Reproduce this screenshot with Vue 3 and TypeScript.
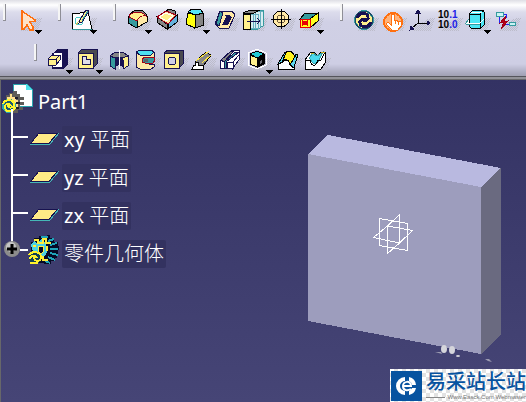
<script setup lang="ts">
import { ref } from 'vue'

// Each shape is [path data, fill, stroke?, stroke width?]
type Shape = [string, string, string?, number?]
interface Tool { name: string; menu?: boolean; measure?: boolean; shapes: Shape[] }

const N = '#171252'
const K = '#000000'
const Y = '#fff08c'
const C = '#ffe9a6'
const T = '#359a9e'
const G = '#858585'
const W = '#ffffff'
const R = '#a00018'
const circle = (x: number, y: number, r: number) =>
  `M${x - r} ${y}a${r} ${r} 0 1 0 ${2 * r} 0a${r} ${r} 0 1 0 ${-2 * r} 0Z`

const topGroups: Tool[][] = [
  [{ name: 'Select', menu: true, shapes: [
    ['M5 3V21L7 21L10 17L13 22H16V19L13 14L18 13V12Z', '#ffe3c7', '#ff7010', 1.5],
  ] }],
  [{ name: 'Sketcher', menu: true, shapes: [
    ['M0 6L16 4L20 21H0Z', W, K, 1],
    ['M0 21H20', 'none', T, 1],
    [circle(7, 13, 4), 'none', '#4bc8c8', 1],
    ['M4 17L10 9', 'none', '#c8c864', 1],
    ['M14 2L17 3L10 14L7 15L8 12Z', Y, N, 1],
    ['M16 3L10 13', 'none', T, 1],
  ] }],
  [
    { name: 'Edge Fillet', menu: true, shapes: [
      ['M3 6L8 2H15L20 7L17 8L12 5H3Z', G, K, 1],
      ['M1 8L10 13V19H8L1 15Z', T, K, 1],
      ['M10 13C11 8 15 7 20 8V14L11 19Z', C, K, 1],
      ['M2 7L8 4C14 4 17 5 19 8C14 7 12 9 10 13L2 9Z', Y, R, 1],
    ] },
    { name: 'Chamfer', shapes: [
      ['M9 3L12 1L18 3L19 7L16 8Z', G, K, 1],
      ['M0 9L10 16V21L1 15Z', G, K, 1],
      ['M11 15L20 7V14L11 21Z', '#64b1dc', K, 1],
      ['M0 9L9 3L19 7L11 16Z', C, R, 1],
      ['M2 9L9 5L16 8L10 13Z', Y, W, 1],
    ] },
    { name: 'Draft Angle', menu: true, shapes: [
      ['M3 5L11 7L10 20L1 16Z', '#ffff10', K, 1],
      ['M11 7L18 5L19 17L10 20Z', G, K, 1],
      ['M3 4L7 1L16 2L18 5L11 7Z', '#57e4f4', K, 1],
    ] },
    { name: 'Shell', shapes: [
      ['M5 3H17L20 7L14 20H4L0 16Z', C, N, 1],
      ['M5 3L8 5L4 18L1 16Z', T, N, 1],
      ['M10 7H14L17 9L13 17H7L11 9Z', N],
    ] },
    { name: 'Thickness', shapes: [
      ['M7 5L14 2H20V18L15 21H7Z', '#d9eef2', T, 1],
      ['M8 6H15V20H8M10 5V20M12 5V20M17 3V19M14 3H20', 'none', '#66afc0', 1],
      ['M0 5L7 2H17L11 5Z', G, K, 1],
      ['M0 6H7V21H0Z', Y, K, 1],
      ['M4 13H17M14 10L17 13L14 16', 'none', N, 1],
    ] },
    { name: 'Target', shapes: [
      [circle(10, 11, 8), C, K, 1], [circle(10, 11, 4), 'none', '#6f5a3d', 1],
      ['M10 1V21M0 11H20', 'none', K, 1],
    ] },
    { name: 'Remove Face', menu: true, shapes: [
      ['M1 11L6 5H19L11 11Z', T, K, 1],
      ['M11 11L19 5V13L12 19Z', '#ffff20', K, 1],
      ['M1 11H11V19H1Z', '#ffff20', '#e80000', 1],
      ['M3 13L9 17M9 13L3 17', 'none', '#e80000', 2],
    ] },
  ],
  [
    { name: 'Update All', shapes: [
      [circle(10, 12, 9), Y, T, 2],
      [circle(10, 12, 9), 'none', '#1b4a66', 1],
      ['M3 10C5 4 14 4 14 9C15 13 9 13 7 11', 'none', N, 3],
      ['M17 14C15 20 6 20 6 15C5 11 11 11 13 13', 'none', N, 3],
    ] },
    { name: 'Manual Update', shapes: [
      [circle(11, 14, 9), '#ffb37b', '#ff7010', 2],
      ['M9 6H12V12L19 14V18L16 22H10L4 16L6 14L9 17Z', W, '#ff7010', 1],
      ['M13 12V16M16 13V17', 'none', '#ff7010', 1],
    ] },
    { name: 'Axis System', shapes: [
      ['M8 15V3M8 15H20M8 15L1 21', 'none', K, 1],
      ['M8 2L6 5H10ZM20 15L17 13V17ZM0 22L1 18L4 21Z', N, N, 1],
    ] },
    { name: 'Mean Dimensions', measure: true, shapes: [] },
    { name: 'Part Body View', menu: true, shapes: [
      ['M0 15L3 11H19L16 15Z', W, T, 1],
      ['M7 2H17L18 4V17L15 20H5L3 18V6Z', '#4be6f4', K, 1],
      ['M3 6H14L18 2M14 6V20', 'none', K, 1],
      ['M5 4H16', 'none', W, 1],
      ['M0 15H14L18 11', 'none', W, 1],
      ['M0 16H14', 'none', T, 1],
    ] },
    { name: 'Break Link', shapes: [
      ['M3 8V14H9M7 6H10V10M13 16H10', 'none', '#2525f2', 1],
      ['M0 4H7V8H0ZM13 14H19V17H13Z', '#c9f3f3', T, 1],
      ['M10 8L4 15L8 14L5 21L12 13L8 14Z', '#c00018', '#a00018', 1],
    ] },
  ],
]

const featureGroup: Tool[] = [
  { name: 'Pad', menu: true, shapes: [
    ['M6 5L9 1H20V17L15 21H4V5Z', N],
    ['M6 5H14V19H5Z', W],
    ['M0 11L4 7H12V12L8 17H0Z', Y, N, 1],
    ['M0 11H8L12 7M8 11V17', 'none', N, 1],
  ] },
  { name: 'Pocket', menu: true, shapes: [
    ['M0 5L4 1H19V16L15 20H0Z', '#4a4a50', N, 1],
    ['M0 5H15V20H0Z', Y, N, 1],
    ['M4 8H8V11H12V16H4Z', '#deddea', N, 1],
  ] },
  { name: 'Shaft', shapes: [
    ['M2 8L7 4H15L20 8L15 11H7Z', G, N, 1],
    ['M2 8L7 10V21L2 18Z', T, N, 1],
    ['M7 9H15V19L11 17L7 19Z', N],
    ['M14 10L20 8V18L15 21V12Z', Y, N, 1],
    ['M11 2V21', 'none', W, 1],
  ] },
  { name: 'Groove', shapes: [
    ['M0 4H18V9H13V16H18V19L15 21H4L0 19Z', C, N, 1],
    ['M0 4L4 2H15L18 4L15 7H4Z', '#4edff2', N, 1],
    ['M6 11L9 9H18L19 12L17 15H9L6 14Z', T, R, 1],
    ['M8 11V14H12V11Z', '#625d67'],
  ] },
  { name: 'Hole', shapes: [
    ['M0 5L4 2H19V16L15 20H0Z', '#4a4a50', N, 1],
    ['M0 5H15V20H0Z', Y, N, 1],
    [circle(8, 13, 4), '#cfcfe5', N, 1],
  ] },
  { name: 'Rib', shapes: [
    ['M3 14L14 4L19 7L10 20Z', G, K, 1],
    ['M4 13L17 3M10 15L19 7', 'none', '#ffe840', 1],
    ['M3 14H6V17H11V21H0L2 17H3Z', W, K, 1],
  ] },
  { name: 'Slot', shapes: [
    ['M0 13L12 2H19V7L13 20H0Z', W, N, 1],
    ['M1 12L11 3H14L4 14Z', G, N, 1],
    ['M4 14L14 5L19 4L10 11L6 14V20H4Z', T, N, 1],
    ['M7 14H13V20H7ZM13 14L19 7V12L13 20Z', W, N, 1],
  ] },
  { name: 'Solid Combine', menu: true, shapes: [
    ['M0 5L9 1L18 5V17L9 21L0 17Z', 'none', W, 1],
    ['M2 7L9 10V19L2 16Z', Y, K, 1],
    ['M10 10L16 7V16L10 19Z', K, K, 1],
    ['M2 6L9 3L16 6L9 10Z', '#23cbd3', K, 1],
    ['M12 13L14 12V15L12 16Z', '#66666c'],
  ] },
  { name: 'Multi-sections Solid', shapes: [
    ['M0 16L8 12L16 14V21H0Z', W, K, 1],
    ['M0 16L7 4H10L5 14ZM12 17L18 6H20L16 20Z', '#5dd8ed', K, 1],
    ['M4 14L9 3H13L16 7H18L12 17C11 11 7 10 4 14Z', '#fff220', K, 1],
  ] },
  { name: 'Removed Multi-sections Solid', shapes: [
    ['M-1 12L5 4H8L11 8L15 4H19V15L15 21H-1Z', W, K, 1],
    ['M3 10L7 5L11 8L17 4L12 14C10 17 6 16 5 12Z', '#4bd8ec', T, 1],
    ['M-1 12H4C5 19 10 19 12 12H15L19 4', 'none', K, 1],
    ['M5 5H8M15 4H19', 'none', '#d0b020', 1],
  ] },
]

const toolRows = [topGroups, [featureGroup]]
const planes = ['xy', 'yz', 'zx']
const activeTool = ref('Select')
const expanded = ref(false)
</script>

<template>
  <div class="app">
    <svg class="defs" aria-hidden="true">
      <defs>
        <pattern id="dither" width="2" height="2" patternUnits="userSpaceOnUse">
          <path d="M0 0H1V1H0ZM1 1H2V2H1Z" fill="#bcbcca" />
        </pattern>
      </defs>
    </svg>
    <header class="toolbars">
      <div v-for="(row, i) in toolRows" :key="i" class="toolbar-row" :class="{ features: i === 1 }">
        <div v-for="(group, g) in row" :key="g" class="group" role="toolbar">
          <span class="handle"></span>
          <button
            v-for="tool in group" :key="tool.name" type="button" class="tool"
            :class="{ wide: tool.menu }" :aria-label="tool.name"
            :aria-pressed="activeTool === tool.name" @click="activeTool = tool.name"
          >
            <svg width="30" height="32" viewBox="-1 -4 30 32" shape-rendering="crispEdges" aria-hidden="true">
              <path d="M5 19L20 10H25L21 23H4Z" fill="url(#dither)" />
              <path
                v-for="(s, k) in tool.shapes" :key="k" :d="s[0]" :fill="s[1]"
                :stroke="s[2] ?? 'none'" :stroke-width="s[3] ?? 0"
              />
              <g v-if="tool.measure" class="measure">
                <text x="0" y="10">10<tspan fill="#2020e8">.1</tspan></text>
                <text x="0" y="20">10<tspan fill="#2020e8">.0</tspan></text>
              </g>
              <path v-if="tool.menu" d="M18 22H25V23H24V24H23V25H22V26H21V25H20V24H19V23H18Z" fill="#000" />
            </svg>
          </button>
        </div>
      </div>
    </header>

    <main class="viewport">
      <ul class="tree">
        <li class="node root">
          <svg width="36" height="38" viewBox="0 0 36 38" shape-rendering="crispEdges" aria-hidden="true">
            <path d="M13 1H27L32 6V23H13Z" fill="#fff" stroke="#2aa4ae" />
            <path d="M26 1V7H32Z" fill="#4de0ee" />
            <path d="M6 12H9V10H13V8H17V11H20V14H24V17H20V19H24V22H20V24H23V27H18V30H13L6 24Z" fill="#5f5c58" />
            <path d="M7 14H10V11H12V14H16V17H18V24H14V20H7Z" fill="#ffe08c" />
            <path d="M15 15H18M16 20H20M15 25H19" stroke="#1c1a2c" stroke-width="2" />
            <circle cx="9" cy="23" r="6" fill="#1c5a70" stroke="#2aa4ae" stroke-width="2" />
            <path d="M3 21C4 16 14 16 14 21C15 25 8 26 8 22M15 24C14 30 5 30 5 24C5 20 10 20 11 23" fill="none" stroke="#fff62b" stroke-width="2" />
            <path d="M12 26V38" stroke="#fff" stroke-width="2" />
          </svg>
          <span class="label"><span class="latin">Part1</span></span>
        </li>
        <li v-for="plane in planes" :key="plane" class="node">
          <svg width="62" height="38" viewBox="0 0 62 38" shape-rendering="crispEdges" aria-hidden="true">
            <path d="M12 0V38M12 16H28" fill="none" stroke="#fff" stroke-width="2" />
            <path d="M39 12H58L49 22H31Z" fill="#ffea86" stroke="#17124f" />
            <path d="M59 12L50 23H30" fill="none" stroke="#45b7b7" />
          </svg>
          <span class="label boxed"><span class="latin">{{ plane }}</span> 平面</span>
        </li>
        <li class="node">
          <svg width="62" height="38" viewBox="0 0 62 38" shape-rendering="crispEdges" aria-hidden="true">
            <path d="M12 0V14M20 15H28" fill="none" stroke="#fff" stroke-width="2" />
            <path d="M39 1H47V0H50V3H54V7H58V11H59V15H58V19H57V23H55V26H51V29H44V28H36V20L31 16V7H34V3H39Z" fill="#060a25" />
            <path d="M41 2H48M48 6L54 4M50 10L57 8M50 14H58M50 18L58 20M48 22L55 25M45 26L50 28" fill="none" stroke="#1fa3b8" stroke-width="2" />
            <path d="M31 10L34 6L37 8L41 4L45 8L48 13L46 20L41 24L38 18L33 16Z" fill="#4bd0e2" />
            <path d="M34 5H38V8H43V4H46V8H51M33 11H36M47 11V16M43 21V25H48" fill="none" stroke="#ffed3b" stroke-width="2" />
            <path d="M39 11H43V17L40 20L38 16Z" fill="#060a25" stroke="#ffed3b" />
            <circle cx="35" cy="23" r="6" fill="#124052" />
            <path d="M29 20C31 16 41 16 41 22C41 27 34 27 34 22M30 28H38M30 24C30 20 36 20 37 23" fill="none" stroke="#fff22b" stroke-width="2" />
          </svg>
          <button class="expander" type="button" aria-label="零件几何体" :aria-expanded="expanded" @click="expanded = !expanded">
            <svg width="18" height="18" viewBox="0 0 18 18" aria-hidden="true">
              <circle cx="9" cy="9" r="8" fill="#8c8c8c" />
              <circle cx="8" cy="7" r="5" fill="#c4c4c4" />
              <path d="M9 4V14M4 9H14" stroke="#000" stroke-width="3" />
            </svg>
          </button>
          <span class="label boxed">零件几何体</span>
        </li>
      </ul>

      <svg class="model" width="194" height="230" viewBox="308 134 194 230" role="img" aria-label="Pad">
        <g shape-rendering="crispEdges">
          <path d="M308 154L481 187V354L308 321Z" fill="#9d9dbd" />
          <path d="M308 154L328 135L501 168L481 187Z" fill="#b9b9e0" />
          <path d="M481 187L501 168V335L481 354Z" fill="#6a6a80" />
          <path
            d="M379.500 218.500L407.500 223.500V250.500L379.500 245.500ZM373.500 237.500L387.500 226L412.500 230.500L399.500 243ZM399.500 214.500V243L387.500 253.500V226Z"
            fill="none" stroke="#fff"
          />
        </g>
        <g fill="#d5d5db">
          <ellipse cx="444" cy="349" rx="3" ry="4" />
          <ellipse cx="452" cy="350" rx="3" ry="4" />
          <ellipse cx="458" cy="356" rx="2" ry="1" />
          <path d="M435 352L441 352L442 354ZM485 359L489 359L492 362L488 361Z" opacity="0.600" />
        </g>
      </svg>

      <a class="brand" href="#">
        <svg width="31" height="30" viewBox="0 0 31 30" aria-hidden="true">
          <path d="M0 0H31V30H0Z" fill="#0753a0" />
          <path d="M14 6A9 9 0 0 0 14 24V20A5 5 0 0 1 14 10ZM18 6A9 9 0 0 1 25 14H21A5 5 0 0 0 18 10ZM18 24A9 9 0 0 0 25 17H21A5 5 0 0 1 18 20Z" fill="#fff" />
          <path d="M12 15H20C20 9 12 10 12 15C12 20 17 20 20 18" fill="none" stroke="#fff" stroke-width="2" />
        </svg>
        <span class="brand-text">
          <strong>易采站长站</strong>
          <small>Www.Easck.Com Webmaster</small>
        </span>
      </a>
    </main>
  </div>
</template>

<style>
body {
  margin: 0;
}
</style>

<style scoped>
.app {
  display: flex;
  flex-direction: column;
  min-height: 100vh;
  overflow: hidden;
  font-family: "Noto Sans", "Noto Sans CJK SC", sans-serif;
}
.defs {
  position: absolute;
  width: 0;
  height: 0;
}
.toolbars {
  display: flex;
  flex-direction: column;
  gap: 8px;
  padding: 4px 0 0 3px;
  background: linear-gradient(#dedee5 0, #ffffff 5px, #dcdcec 12px, #d0d0e5 22px, #cecee4 64px, #aaaabf 73px, #a0a0b2 76px);
  border-bottom: 1px solid #55555c;
}
.toolbar-row {
  display: flex;
  gap: 12px;
}
.features {
  padding-left: 31px;
}
.group {
  display: flex;
}
.handle {
  box-sizing: border-box;
  width: 3px;
  height: 17px;
  margin-right: 10px;
  background: #f5f5f5;
  border-right: 1px solid #8e8e96;
  border-bottom: 1px solid #8e8e96;
}
.tool {
  width: 28px;
  height: 32px;
  padding: 0;
  border: 0;
  background: none;
}
.wide {
  width: 30px;
}
.tool svg {
  display: block;
}
.measure {
  font: bold 10px "Liberation Sans", sans-serif;
}
.viewport {
  position: relative;
  display: flex;
  flex: 1;
  justify-content: space-between;
  align-items: flex-start;
  padding: 1px 24px 0 0;
  border-top: 2px solid #929298;
  background: linear-gradient(#333263, #464576);
  box-shadow: inset 1px 1px #67676a;
}
.tree {
  margin: 0;
  padding: 3px 0 0;
  list-style: none;
}
.node {
  position: relative;
  display: flex;
  align-items: center;
  height: 38px;
}
.label {
  padding: 0 2px;
  color: #fff;
  font-size: 20px;
  font-weight: 300;
  line-height: 28px;
  white-space: nowrap;
}
.latin {
  font-weight: 400;
}
.boxed {
  border-radius: 2px;
  background: #333260;
}
.expander {
  position: absolute;
  top: 5px;
  left: 3px;
  width: 18px;
  height: 18px;
  padding: 0;
  border: 0;
  background: none;
}
.expander svg {
  display: block;
}
.model {
  flex: none;
  margin-top: 54px;
}
.brand {
  position: absolute;
  right: 0;
  bottom: 0;
  display: flex;
  gap: 4px;
  padding: 2px 0 1px 1px;
  background: repeating-conic-gradient(#e2e2e2 0 25%, #ffffff 0 50%) 0 0 / 8px 8px;
  text-decoration: none;
}
.brand-text {
  display: flex;
  flex-direction: column;
}
.brand strong {
  color: #0753a0;
  font-size: 20px;
  font-weight: 500;
  line-height: 22px;
}
.brand small {
  display: flex;
  align-items: center;
  gap: 2px;
  color: #777;
  font: 6px/8px "Liberation Sans", sans-serif;
  white-space: nowrap;
}
.brand small::before {
  flex: 1;
  height: 1px;
  background: #888;
  content: "";
}
</style>
